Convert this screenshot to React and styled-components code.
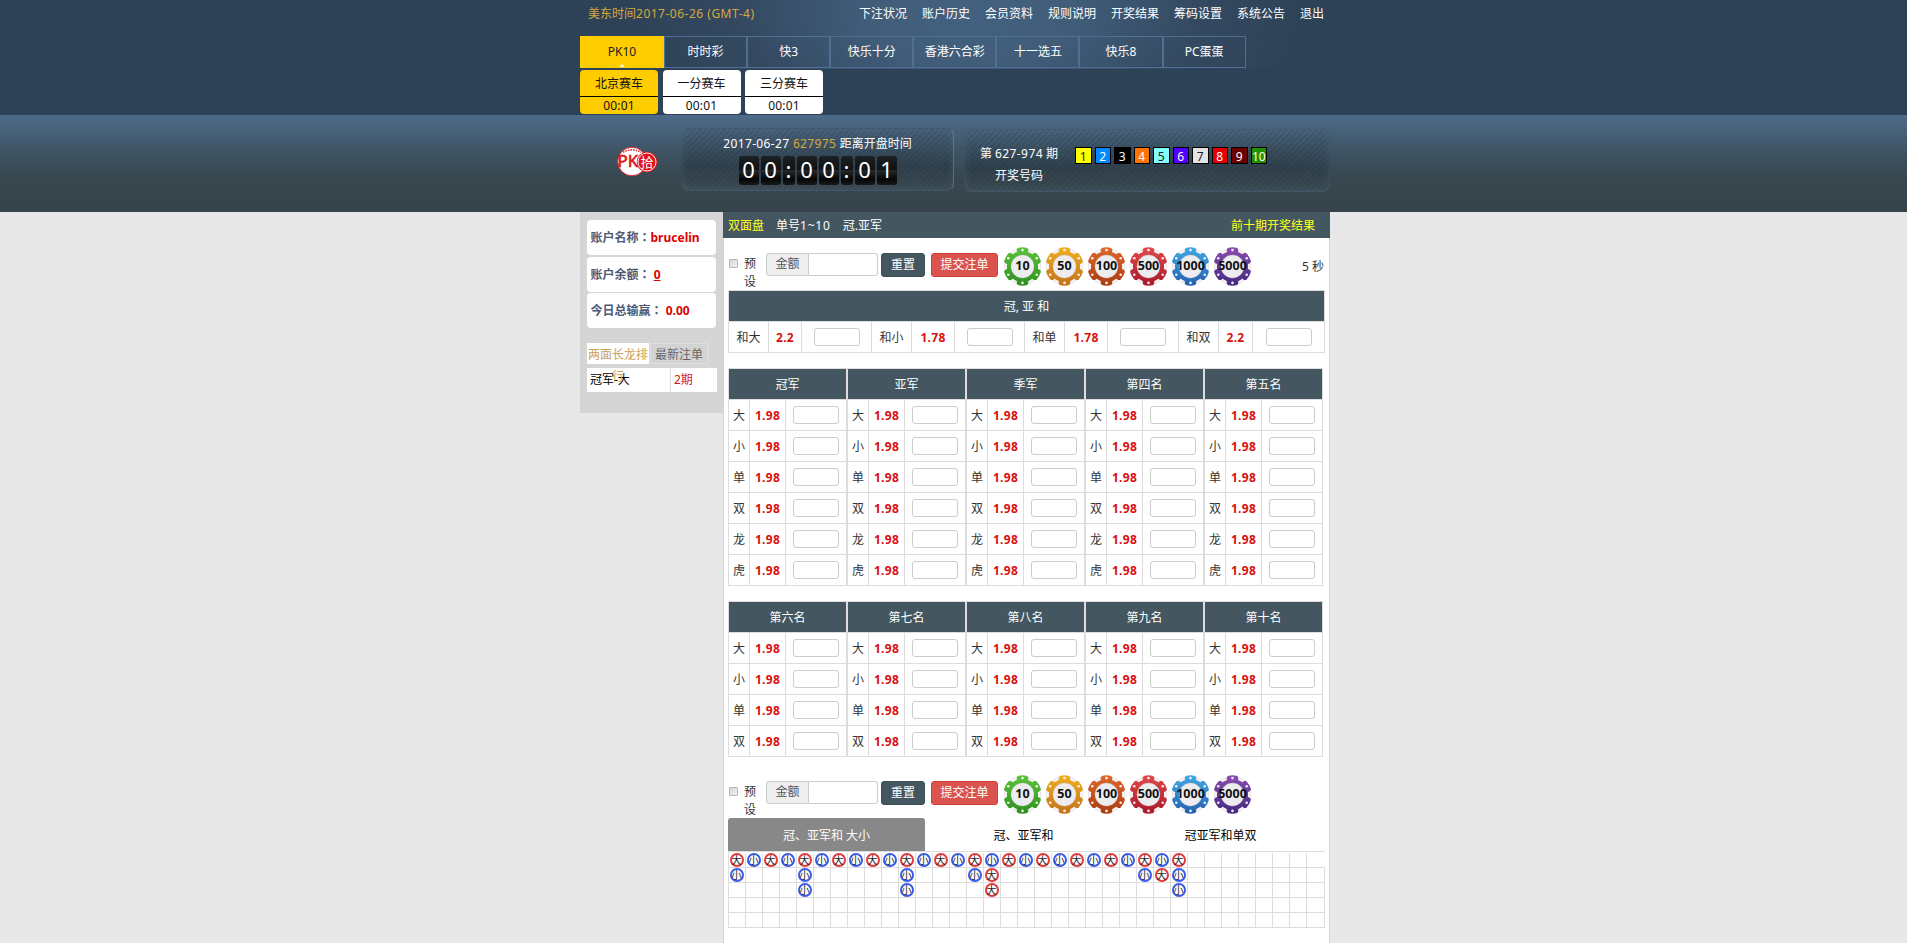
import React from 'react';
import styled, { createGlobalStyle, css } from 'styled-components';

const Global = createGlobalStyle`
  * { box-sizing: border-box; }
  html, body { margin: 0; padding: 0; }
  body {
    background: #e8e8e8;
    font: 12px/17px "Noto Sans", "Noto Sans CJK SC", sans-serif;
    color: #333;
    overflow: hidden;
  }
  a { color: inherit; text-decoration: none; }
`;

const Page = styled.div`
  height: 943px;
  overflow: hidden;
`;

const Wrap = styled.div`
  width: 750px;
  margin-left: 580px;
`;

/* ---------- header ---------- */
const Header = styled.header`
  height: 115px;
  background: radial-gradient(ellipse 340px 180px at 970px 12px, #43617f 0%, #405c79 32%, rgba(56, 79, 104, 0.55) 68%, rgba(46, 66, 87, 0) 100%) 0 0 / 100% 69px no-repeat, #2e4257;
`;

const TopLine = styled.div`
  display: flex;
  justify-content: space-between;
  height: 36px;
  padding: 5px 6px 0 8px;
`;

const Clock = styled.span`
  color: #d5a93f;
`;

const Latin = styled.span`
  letter-spacing: ${p => p.$gap || 0.45}px;
`;

const Menu = styled.nav`
  display: flex;
  gap: 15px;
  color: #fff;
`;

const GameNav = styled.nav`
  display: flex;
  height: 32px;
  box-shadow: inset 0 0 1px rgba(20, 35, 55, 0.5);
`;

const GameTab = styled.a`
  position: relative;
  width: ${p => (p.$active ? 84 : 83.1)}px;
  line-height: 30px;
  text-align: center;
  color: ${p => (p.$active ? '#222' : '#fff')};
  background: ${p => (p.$active ? '#fc0' : 'transparent')};
  border: 1px solid ${p => (p.$active ? '#fc0' : '#4f7092')};
  ${p => p.$active && css`
    &::after {
      content: '';
      position: absolute;
      left: 38px;
      bottom: 0;
      border: 3.5px solid transparent;
      border-top: 0;
      border-bottom: 3px solid #fff6d8;
    }
  `}
`;

const SubNav = styled.div`
  display: flex;
  gap: 4.5px;
  padding-top: 2px;
`;

const SubCard = styled.div`
  width: 78px;
  height: 44px;
  border-radius: 4px;
  text-align: center;
  color: #111;
  background: ${p => (p.$active ? '#fc0' : '#fff')};
`;

const SubName = styled.div`
  height: 27px;
  line-height: 27px;
  border-bottom: 1px solid #000;
`;

const SubTime = styled.div`
  line-height: 17px;
  letter-spacing: 0.2px;
`;

/* ---------- draw band ---------- */
const Band = styled.section`
  height: 97px;
  background: linear-gradient(#4d6b88 0%, #455f77 20%, #3e5262 40%, #38474f 66%, #36434a 100%);
`;

const BandRow = styled(Wrap)`
  display: flex;
  align-items: flex-start;
  padding-top: 13px;
`;

const LogoBox = styled.div`
  width: 101px;
  padding: 18px 0 0 36px;
`;

const glass = css`
  height: 63px;
  border-radius: 7px;
  color: #fff;
  border: 1px solid rgba(80, 105, 120, 0.25);
  box-shadow: inset 0 0 9px rgba(90, 115, 135, 0.35);
  background:
    repeating-linear-gradient(135deg, rgba(20, 32, 42, 0.1) 0 2px, rgba(120, 145, 160, 0.02) 2px 4.2px),
    linear-gradient(rgba(72, 98, 122, 0.5), rgba(40, 56, 68, 0.6) 60%, rgba(64, 80, 88, 0.5));
`;

const TimerPanel = styled.div`
  ${glass}
  width: 273px;
  border-right-color: rgba(150, 175, 190, 0.4);
  padding-top: 6px;
  text-align: center;
`;

const Issue = styled.span`
  color: #d5a93f;
`;

const Flip = styled.div`
  display: flex;
  justify-content: center;
  gap: 2px;
  padding-top: 4px;
`;

const Digit = styled.span`
  width: ${p => (p.$colon ? 12 : 20)}px;
  height: 29px;
  border-radius: 3px;
  font-size: 22px;
  line-height: 27px;
  color: #fff;
  background: linear-gradient(#1d2022, #101214 48%, #24282a 50%, #060606 80%, #16191a);
`;

const ResultPanel = styled.div`
  ${glass}
  width: 366px;
  margin: 1px 0 0 10px;
  display: flex;
  padding: 16px 0 0 14px;
`;

const ResultLabel = styled.div`
  width: 80px;
  text-align: center;
  white-space: nowrap;
  line-height: 22px;
  margin-top: -3px;
`;

const Balls = styled.div`
  display: flex;
  gap: 3px;
  margin: 1px 0 0 16px;
`;

const Ball = styled.span`
  width: 16.5px;
  height: 17px;
  border: 1px solid #000;
  line-height: 17px;
  display: flex;
  justify-content: center;
  background: ${p => p.$bg};
  color: ${p => (p.$dark ? '#222' : '#fff')};
`;

/* ---------- body ---------- */
const Body = styled(Wrap)`
  display: flex;
  align-items: flex-start;
`;

const Side = styled.aside`
  width: 143px;
  height: 201px;
  padding: 8px 6px 0 7px;
  background: #d5d5d5;
`;

const Info = styled.div`
  width: 129px;
  height: 35px;
  margin-bottom: 1.6px;
  padding-left: 3.5px;
  border-radius: 4px;
  background: #fff;
  line-height: 34px;
  font-weight: bold;
  white-space: pre;
  color: #4c5975;
  b { color: #e00000; font-weight: 700; }
  u { color: #e00000; }
`;

const Colon = styled.span`
  font-family: "Noto Sans CJK TC", sans-serif;
`;

const SideTabs = styled.div`
  display: flex;
  gap: 1px;
  margin-top: 15px;
  height: 22px;
`;

const SideTab = styled.a`
  position: relative;
  z-index: 1;
  width: ${p => (p.$active ? 62 : 58)}px;
  height: 21px;
  text-align: center;
  line-height: 22px;
  color: ${p => (p.$active ? '#c9a15c' : '#666')};
  background: ${p => (p.$active ? '#fff' : '#d3d3d3')};
  border: 1px solid ${p => (p.$active ? '#fff' : '#dedede')};
`;

const DragonRow = styled.div`
  display: flex;
  width: 130px;
  height: 24px;
  margin-top: 3px;
  line-height: 23px;
  background: #fff;
`;

const DragonName = styled.div`
  width: 84px;
  padding-left: 3px;
  color: #000;
  border-right: 1px solid #ddd;
`;

const DragonCount = styled.div`
  padding-left: 3px;
  color: #d9161c;
`;

const Main = styled.main`
  width: 607px;
  height: 731px;
  background: #fff;
  box-shadow: inset 1px 0 #d3d3d3, inset -1px 0 #d3d3d3;
`;

const PlayBar = styled.div`
  display: flex;
  gap: 12px;
  height: 26px;
  padding: 0 15px 0 5px;
  line-height: 27px;
  color: #fff;
  background: #445761;
`;

const Hot = styled.a`
  color: #ffff1e;
  margin-left: ${p => (p.$right ? 'auto' : 0)};
`;

const Tools = styled.div`
  display: flex;
  align-items: flex-start;
  height: 52px;
  padding: 8px 6px 0 6px;
`;

const Check = styled.span`
  width: 9px;
  height: 9px;
  margin: 13px 6px 0 0;
  border: 1px solid #b5b5b5;
  border-radius: 1px;
  background: linear-gradient(135deg, #d8d8d8, #f2f2f2);
`;

const Preset = styled.label`
  width: 12px;
  margin: 9px 10px 0 0;
  line-height: 17.5px;
`;

const Addon = styled.span`
  width: 43px;
  height: 23px;
  margin-top: 7px;
  line-height: 20px;
  text-align: center;
  color: #555;
  background: #eee;
  border: 1px solid #ccc;
  border-radius: 3px 0 0 3px;
`;

const AmountInput = styled.input`
  width: 69px;
  height: 23px;
  margin: 7px 3px 0 0;
  padding: 0 4px;
  border: 1px solid #ccc;
  border-left: 0;
  border-radius: 0 3px 3px 0;
`;

const Button = styled.button`
  width: ${p => (p.$danger ? 67 : 44)}px;
  height: 24px;
  margin: 7px 6px 0 0;
  padding: 0;
  border: 1px solid ${p => (p.$danger ? '#d43f3a' : '#3d505a')};
  border-radius: 3px;
  font: inherit;
  line-height: 22px;
  color: #fff;
  background: ${p => (p.$danger ? '#d9534f' : '#445761')};
`;

const Chips = styled.div`
  display: flex;
  gap: 3px;
  margin: 0 0 0 -1px;
  padding-top: 1px;
`;

const ChipBox = styled.div`
  position: relative;
  width: 39px;
  height: 39px;
`;

const ChipText = styled.span`
  position: absolute;
  inset: 0;
  display: flex;
  justify-content: center;
  font-weight: bold;
  font-size: 12.5px;
  line-height: 37px;
  color: #111;
`;

const Seconds = styled.span`
  margin: 12px 0 0 auto;
`;

const SumTable = styled.div`
  display: grid;
  grid-template-columns: 40px 33px 70px 40px 43px 70px 40px 43px 71px 40px 34px 72px;
  width: 597px;
  margin-left: 5px;
  border: 1px solid #ddd;
  border-right: 0;
  border-bottom: 0;
`;

const Head = styled.div`
  grid-column: 1 / -1;
  height: 31px;
  line-height: 31px;
  text-align: center;
  color: #fff;
  background: #445761;
  border-right: 1px solid #ddd;
  border-bottom: 1px solid #ddd;
`;

const Cell = styled.div`
  display: flex;
  align-items: center;
  justify-content: center;
  height: 31px;
  border-right: 1px solid #ddd;
  border-bottom: 1px solid #ddd;
`;

const Odds = styled(Cell)`
  color: #d9100f;
  font-weight: bold;
  letter-spacing: 0.3px;
`;

const Bet = styled.input`
  width: 46px;
  height: 18px;
  padding: 0 2px;
  border: 1px solid #ccc;
  border-radius: 3px;
`;

const Tables = styled.div`
  display: flex;
  margin: 15px 0 0 5px;
`;

const RankTable = styled.div`
  display: grid;
  grid-template-columns: 21px 36px 61px;
  width: 119px;
  border: 1px solid #ddd;
  border-right: 0;
  border-bottom: 0;
`;

const Spacer = styled.div`
  height: 9px;
`;

const RoadTabs = styled.div`
  display: flex;
  height: 34px;
  margin: 0 5px;
  border-bottom: 1px solid #ddd;
`;

const RoadTab = styled.a`
  width: 197px;
  line-height: 35px;
  text-align: center;
  color: ${p => (p.$active ? '#fff' : '#000')};
  background: ${p => (p.$active ? '#888' : 'transparent')};
  border-radius: 3px 3px 0 0;
`;

const Road = styled.div`
  display: grid;
  grid-template-columns: repeat(34, 17px) 18px;
  grid-auto-rows: 15px;
  width: 597px;
  margin-left: 5px;
  padding-top: 1px;
  border-left: 1px solid #ddd;
`;

const RoadCell = styled.div`
  display: flex;
  align-items: center;
  justify-content: center;
  border-right: 1px solid ${p => (p.$open ? 'transparent' : '#ddd')};
  border-bottom: 1px solid #ddd;
`;

const Bead = styled.span`
  flex: none;
  width: 14px;
  height: 14px;
  margin-left: -1px;
  border: 2px solid ${p => (p.$big ? '#e03a3a' : '#3a5be6')};
  border-radius: 50%;
  font-size: 10px;
  line-height: 10px;
  display: flex;
  justify-content: center;
  color: #222;
`;

/* ---------- data ---------- */
const MENU = ['下注状况', '账户历史', '会员资料', '规则说明', '开奖结果', '筹码设置', '系统公告', '退出'];
const GAMES = ['PK10', '时时彩', '快3', '快乐十分', '香港六合彩', '十一选五', '快乐8', 'PC蛋蛋'];
const BALLS = ['#ffff00', '#0089ff', '#000000', '#ff7300', '#81ffff', '#5200ff', '#e3e3e3', '#e60000', '#6e0000', '#1f9200'];
const SUMS = [['和大', '2.2'], ['和小', '1.78'], ['和单', '1.78'], ['和双', '2.2']];
const CHIPS = [
  ['10', '#5cc23a', '#2f8f1f'],
  ['50', '#efb01c', '#c4701c'],
  ['100', '#e0662a', '#a83d14'],
  ['500', '#e24848', '#a8182c'],
  ['1000', '#3fa9e6', '#2660ae'],
  ['5000', '#8a4bb0', '#432a80'],
];
const ROAD_ROWS = [
  Object.fromEntries(Array.from({ length: 27 }, (_, i) => [i + 1, i % 2 ? '小' : '大'])),
  { 1: '小', 5: '小', 11: '小', 15: '小', 16: '大', 25: '小', 26: '大', 27: '小' },
  { 5: '小', 11: '小', 16: '大', 27: '小' },
  {},
  {},
];

/* ---------- parts ---------- */
function Logo() {
  return (
    <svg width="42" height="32" viewBox="0 0 42 32">
      <circle cx="16" cy="15.5" r="14.3" fill="#fff" stroke="#d8262c" strokeWidth="1" />
      <path d="M7 6.2 Q16 1.5 25 6.2" fill="none" stroke="#dd3a3f" strokeWidth="1.6" strokeDasharray="1.6 1" />
      <circle cx="31" cy="16" r="10.3" fill="#e0151c" />
      <circle cx="31" cy="16" r="9" fill="none" stroke="#fff" strokeWidth="0.9" />
      <text x="1.5" y="20.6" fontFamily="Noto Sans, sans-serif" fontSize="15.5" fill="#e0151c" stroke="#e0151c" strokeWidth="0.6" textLength="20.5" lengthAdjust="spacingAndGlyphs">PK</text>
      <text x="31" y="20.6" fontFamily="Noto Sans CJK SC, sans-serif" fontSize="13" fill="#fff" textAnchor="middle">拾</text>
    </svg>
  );
}

function Chip({ label, from, to }) {
  const id = `chip${label}`;
  return (
    <ChipBox>
      <svg width="39" height="39" viewBox="-19.5 -19.5 39 39">
        <defs>
          <linearGradient id={id} x1="0" y1="-19" x2="0" y2="19" gradientUnits="userSpaceOnUse">
            <stop offset="0" stopColor={from} />
            <stop offset="1" stopColor={to} />
          </linearGradient>
        </defs>
        <circle r="18.2" fill="#f6f4f4" stroke="#ddd6d6" strokeWidth="0.6" />
        <circle r="15.6" fill={`url(#${id})`} />
        {[0, 60, 120, 180, 240, 300].map(a => {
          const t = (a * Math.PI) / 180;
          const p = (r, d) => `${r * Math.sin(t + d)} ${-r * Math.cos(t + d)}`;
          return (
            <g key={a}>
              <path d={`M${p(13, -0.4)} L${p(17.6, -0.34)} L${p(19.2, -0.25)} A19.2 19.2 0 0 1 ${p(19.2, 0.25)} L${p(17.6, 0.34)} L${p(13, 0.4)} Z`} fill={`url(#${id})`} />
              <circle cx={16.4 * Math.sin(t)} cy={-16.4 * Math.cos(t)} r="1.3" fill="#fff" opacity="0.9" />
            </g>
          );
        })}
        <circle r="11.7" fill="#ededf0" stroke={to} strokeOpacity="0.35" strokeWidth="0.8" />
      </svg>
      <ChipText>{label}</ChipText>
    </ChipBox>
  );
}

function Toolbar({ seconds }) {
  return (
    <Tools>
      <Check />
      <Preset>预设</Preset>
      <Addon>金额</Addon>
      <AmountInput />
      <Button>重置</Button>
      <Button $danger>提交注单</Button>
      <Chips>
        {CHIPS.map(([l, a, b]) => <Chip key={l} label={l} from={a} to={b} />)}
      </Chips>
      {seconds && <Seconds>{seconds} 秒</Seconds>}
    </Tools>
  );
}

function Ranks({ names, rows }) {
  return (
    <Tables>
      {names.map(n => (
        <RankTable key={n}>
          <Head>{n}</Head>
          {[...rows].map(r => (
            <React.Fragment key={r}>
              <Cell>{r}</Cell>
              <Odds>1.98</Odds>
              <Cell><Bet /></Cell>
            </React.Fragment>
          ))}
        </RankTable>
      ))}
    </Tables>
  );
}

export default function App() {
  return (
    <Page>
      <Global />
      <Header>
        <Wrap>
          <TopLine>
            <Clock>美东时间<Latin $gap={0.5}>2017-06-26 (GMT-4)</Latin></Clock>
            <Menu>{MENU.map(m => <a key={m}>{m}</a>)}</Menu>
          </TopLine>
          <GameNav>
            {GAMES.map((g, i) => <GameTab key={g} $active={i === 0}>{g}</GameTab>)}
          </GameNav>
          <SubNav>
            {['北京赛车', '一分赛车', '三分赛车'].map((s, i) => (
              <SubCard key={s} $active={i === 0}>
                <SubName>{s}</SubName>
                <SubTime>00:01</SubTime>
              </SubCard>
            ))}
          </SubNav>
        </Wrap>
      </Header>
      <Band>
        <BandRow>
          <LogoBox><Logo /></LogoBox>
          <TimerPanel>
            <Latin $gap={0.35}>2017-06-27 <Issue>627975</Issue> </Latin>距离开盘时间
            <Flip>
              {[...'00:00:01'].map((d, i) => <Digit key={i} $colon={d === ':'}>{d}</Digit>)}
            </Flip>
          </TimerPanel>
          <ResultPanel>
            <ResultLabel>第 <Latin $gap={0.4}>627-974</Latin> 期<br />开奖号码</ResultLabel>
            <Balls>
              {BALLS.map((c, i) => <Ball key={c} $bg={c} $dark={[0, 4, 6].includes(i)}>{i + 1}</Ball>)}
            </Balls>
          </ResultPanel>
        </BandRow>
      </Band>
      <Body>
        <Side>
          <Info>账户名称<Colon>：</Colon><b>brucelin</b></Info>
          <Info>账户余额<Colon>：</Colon> <u>0</u></Info>
          <Info>今日总输赢<Colon>：</Colon> <b>0.00</b></Info>
          <SideTabs>
            <SideTab $active>两面长龙排行</SideTab>
            <SideTab>最新注单</SideTab>
          </SideTabs>
          <DragonRow>
            <DragonName>冠军-大</DragonName>
            <DragonCount>2期</DragonCount>
          </DragonRow>
        </Side>
        <Main>
          <PlayBar>
            <Hot>双面盘</Hot>
            <a>单号<Latin $gap={0.8}>1~10</Latin></a>
            <a>冠.亚军</a>
            <Hot $right>前十期开奖结果</Hot>
          </PlayBar>
          <Toolbar seconds="5" />
          <SumTable>
            <Head>冠, 亚 和</Head>
            {SUMS.map(([n, o]) => (
              <React.Fragment key={n}>
                <Cell>{n}</Cell>
                <Odds>{o}</Odds>
                <Cell><Bet /></Cell>
              </React.Fragment>
            ))}
          </SumTable>
          <Ranks names={['冠军', '亚军', '季军', '第四名', '第五名']} rows="大小单双龙虎" />
          <Ranks names={['第六名', '第七名', '第八名', '第九名', '第十名']} rows="大小单双" />
          <Spacer />
          <Toolbar />
          <RoadTabs>
            <RoadTab $active>冠、亚军和 大小</RoadTab>
            <RoadTab>冠、亚军和</RoadTab>
            <RoadTab>冠亚军和单双</RoadTab>
          </RoadTabs>
          <Road>
            {ROAD_ROWS.flatMap((row, r) =>
              Array.from({ length: 35 }, (_, c) => (
                <RoadCell key={`${r}-${c}`} $open={r === 0 && c === 34}>
                  {row[c + 1] && <Bead $big={row[c + 1] === '大'}>{row[c + 1]}</Bead>}
                </RoadCell>
              ))
            )}
          </Road>
        </Main>
      </Body>
    </Page>
  );
}
